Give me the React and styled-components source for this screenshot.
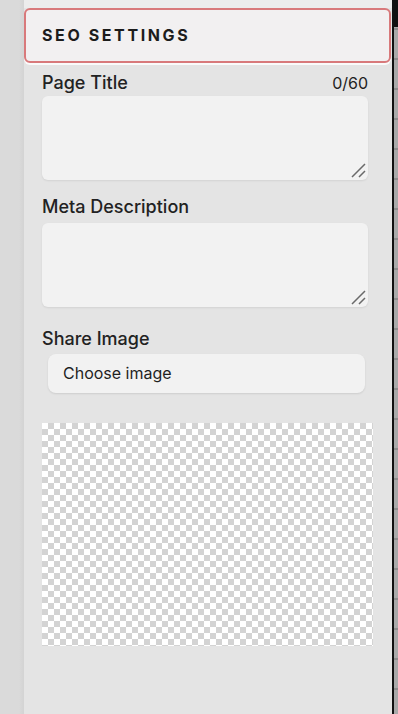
import styled, { createGlobalStyle } from 'styled-components'

const Global = createGlobalStyle`
  html, body { margin: 0; padding: 0; overflow: hidden; }
  body {
    font-family: Inter, "Noto Sans", sans-serif;
    color: #1f1f1f;
    background: #e4e4e4;
  }
`

const Screen = styled.div`
  display: flex;
  width: 398px;
  height: 714px;
  overflow: hidden;
`

const LeftRail = styled.div`
  width: 24px;
  flex: none;
  background: linear-gradient(to right, #dadada 0, #dadada 19px, #d3d3d3 24px);
`

const RightRail = styled.div`
  width: 4px;
  flex: none;
  border-left: 2px solid #111;
  background: repeating-linear-gradient(
    to bottom,
    #a9a9a9 0,
    #a9a9a9 28px,
    #8c8c8c 28px,
    #8c8c8c 30px
  );
  position: relative;

  &::before {
    content: '';
    position: absolute;
    top: 0;
    left: 0;
    right: 0;
    height: 27px;
    background: #111;
  }
`

const Panel = styled.div`
  width: 368px;
  flex: none;
  min-width: 0;
  display: flex;
  flex-direction: column;
  background: #e4e4e4;
  padding-top: 8px;
  background-image: linear-gradient(#ececec, #ececec);
  background-size: 100% 8px;
  background-repeat: no-repeat;
`

const Header = styled.div`
  height: 50px;
  margin-right: 1px;
  display: flex;
  align-items: center;
  padding-left: 16px;
  padding-bottom: 1px;
  border: 2px solid #d8797b;
  border-radius: 6px;
  background: #f2f0f1;
  box-shadow: 0 2px 0 #fafafa;
  font-size: 16px;
  font-weight: 700;
  letter-spacing: 2.6px;
  color: #1c1c1c;
`

const Body = styled.div`
  display: flex;
  flex-direction: column;
  padding: 9px 24px 0 18px;
`

const LabelRow = styled.div`
  display: flex;
  justify-content: space-between;
  align-items: baseline;
  margin-top: ${p => p.$gap || 0}px;
  font-size: 18px;
  line-height: 22px;
  font-weight: 500;
  color: #222;
`

const Counter = styled.span`
  font-size: 16px;
  font-weight: 400;
`

const Field = styled.div`
  position: relative;
  margin-top: ${p => p.$gap || 2}px;
  height: 84px;
`

const Area = styled.textarea`
  display: block;
  box-sizing: border-box;
  width: 100%;
  height: 100%;
  border: none;
  border-radius: 6px;
  background: #f2f2f2;
  box-shadow: 0 1px 2px rgba(0, 0, 0, 0.08);
  outline: none;
  font-family: inherit;
  font-size: 15px;
  padding: 8px;
  resize: none;
`

const Grip = styled.svg`
  position: absolute;
  right: 2px;
  bottom: 2px;
  width: 15px;
  height: 15px;
  pointer-events: none;
`

const ResizeGrip = () => (
  <Grip viewBox="0 0 15 15">
    <path d="M1 14 L14 1 M8 14 L14 8" stroke="#6a6a6a" strokeWidth="1.5" fill="none" />
  </Grip>
)

const ChooseButton = styled.button`
  margin: 4px 3px 0 6px;
  height: 39px;
  display: flex;
  align-items: center;
  padding: 0 15px 2px;
  border: none;
  border-radius: 8px;
  background: #f2f2f2;
  box-shadow: 0 1px 2px rgba(0, 0, 0, 0.1);
  font-family: inherit;
  font-size: 16px;
  color: #1f1f1f;
`

const Preview = styled.div`
  margin-top: 30px;
  width: 331px;
  height: 223px;
  background-color: #fff;
  background-image: conic-gradient(
    #d3d3d3 0 25%,
    #ffffff 0 50%,
    #d3d3d3 0 75%,
    #ffffff 0
  );
  background-size: 12px 12px;
`

export default function App() {
  return (
    <>
      <Global />
      <Screen>
        <LeftRail />
        <Panel>
          <Header>SEO SETTINGS</Header>
          <Body>
            <LabelRow>
              <span>Page Title</span>
              <Counter>0/60</Counter>
            </LabelRow>
            <Field>
              <Area />
              <ResizeGrip />
            </Field>
            <LabelRow $gap={16}>
              <span>Meta Description</span>
            </LabelRow>
            <Field $gap={5}>
              <Area />
              <ResizeGrip />
            </Field>
            <LabelRow $gap={21}>
              <span>Share Image</span>
            </LabelRow>
            <ChooseButton>Choose image</ChooseButton>
            <Preview />
          </Body>
        </Panel>
        <RightRail />
      </Screen>
    </>
  )
}
